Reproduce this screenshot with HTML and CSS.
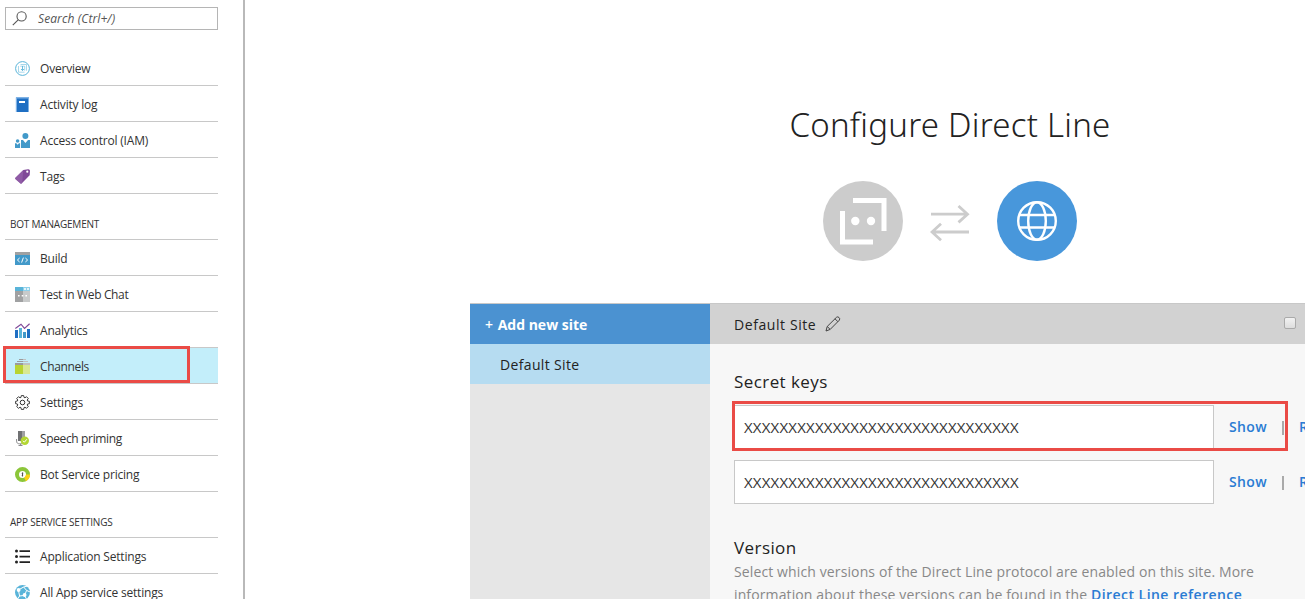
FILE: index.html
```
<!DOCTYPE html>
<html lang="en">
<head>
<meta charset="utf-8">
<title>Configure Direct Line</title>
<link rel="stylesheet" href="styles.css">
</head>
<body>
<div class="app">
  <aside class="sidebar">
    <div class="search">
      <svg class="search-icon" width="16" height="16" viewBox="0 0 16 16" fill="none" stroke="#555" stroke-width="1.1"><circle cx="9.6" cy="5.4" r="4.6"/><path d="M6.4 8.700 .8 14.200"/></svg>
      <span class="search-text">Search (Ctrl+/)</span>
    </div>
    <ul class="menu">
      <li class="item"><svg class="icon" viewBox="0 0 15 15" fill="none" stroke="#59b4d9"><circle cx="7.5" cy="7.5" r="6.9" stroke-width="1"/><path d="M5.5 3.5h6v6.2M3.5 5v6.2h6M5.2 5.2h4.5v4.5" stroke-width=".7" opacity=".75"/><path d="M7.5 5v4.5M6 8l1.5 1.6L9 8" stroke-width=".9"/></svg><span class="label">Overview</span></li>
      <li class="item"><svg class="icon" viewBox="0 0 15 15"><path fill="#1f6fc3" d="M1 1h12v14H1z"/><path fill="#7fb2e5" d="M1 0h13v1.5H2V15H.8V1zM13 0h1v15h-1z"/><path fill="#fff" d="M4 4h6v2H4z"/></svg><span class="label">Activity log</span></li>
      <li class="item"><svg class="icon" viewBox="0 0 15 15" fill="#4299c9"><circle cx="10.4" cy="3" r="3"/><circle cx="2.6" cy="8" r="1.8"/><path d="M6 7h2l2.4 3L13 7h2v8H6zM0 10.3h1.3l1.3 1.5L4 10.3h1.1V15H0z"/></svg><span class="label">Access control (IAM)</span></li>
      <li class="item"><svg class="icon" viewBox="0 0 15 15"><path fill="#804998" d="M8.3.9 13 .2q2-.2 2 1.600L14.700 6.300 6.600 14.600Q6 15 5.400 14.600L.3 10Q-.2 9.400.4 8.800z"/><path fill="#9a68af" d="M8.3.9 7.200 14 6.600 14.600 6 14.800.3 10Q-.2 9.400.4 8.800z" opacity=".6"/><circle cx="12.300" cy="2.700" r="1.1" fill="#fff"/></svg><span class="label">Tags</span></li>
    </ul>
    <h2 class="group">BOT MANAGEMENT</h2>
    <ul class="menu ruled">
      <li class="item"><svg class="icon" viewBox="0 0 15 15"><path fill="#a0a1a2" d="M0 1h15v3H0z"/><path fill="#4299c9" d="M0 4h15v10H0z"/><path d="M4.6 7 2.4 9l2.2 2M10.4 7l2.2 2-2.2 2M8.4 6.6l-1.8 5" fill="none" stroke="#fff"/></svg><span class="label">Build</span></li>
      <li class="item"><svg class="icon" viewBox="0 0 15 15"><path fill="#a0a1a2" d="M0 4h8v11H0z"/><path fill="#c8caca" d="M8 4h7v11H8z"/><path fill="#59b4d9" d="M0 0h8v4H0z"/><path fill="#8fd0ea" d="M8 0h7v4H8z"/><path fill="#fff" d="M9 1.2h2v1.5H9zM12 1.2h2v1.5h-2zM3 8h1.6v1.6H3zM6.7 8h1.6v1.6H6.7zM10.4 8H12v1.6h-1.6z"/></svg><span class="label tight">Test in Web Chat</span></li>
      <li class="item"><svg class="icon" viewBox="0 0 15 15"><path fill="#1f6fc3" d="M0 7h3v8H0zM12 6h3v9h-3z"/><path fill="#59b4d9" d="M4 5h3v10H4z"/><path fill="#4299c9" d="M8 9h3v6H8z"/><path d="M.3 5.4 6 1.2l3.5 4.3L14.6.8" fill="none" stroke="#804998" stroke-width="1.2"/></svg><span class="label">Analytics</span></li>
      <li class="item selected"><svg class="icon" viewBox="0 0 15 15"><path fill="#9a9b9c" d="M4 0h4v1H4zM2 2h6v1H2zM0 4h8v2H0z"/><path fill="#bfc1c2" d="M8 0h3v1H8zM8 2h5v1H8zM8 4h7v2H8z"/><path fill="#b8d432" d="M0 6h8v9H0z"/><path fill="#d8e893" d="M8 6h7v9H8z"/></svg><span class="label tight">Channels</span></li>
      <li class="item"><svg class="icon" viewBox="0 0 15 15" fill="none" stroke="#333"><circle cx="7.5" cy="7.5" r="2.3" stroke-width="1"/><path d="M6.3.6h2.4l.3 1.8 1 .4 1.5-1.1 1.8 1.8-1.1 1.5.4 1 1.8.3v2.4l-1.8.3-.4 1 1.1 1.5-1.8 1.8L10 12.2l-1 .4-.3 1.8H6.3L6 12.6l-1-.4-1.5 1.1-1.8-1.8L2.8 10l-.4-1-1.8-.3V6.3L2.4 6l.4-1-1.1-1.5 1.8-1.8L5 2.8l1-.4z" stroke-width=".95" stroke-linejoin="round"/></svg><span class="label">Settings</span></li>
      <li class="item"><svg class="icon" viewBox="0 0 15 15"><path fill="#707173" d="M3 0h4v10H3z"/><path fill="#a0a1a2" d="M7 0h3v9H7z"/><path d="M1.6 8v2.2c0 1.7 1 2.6 3 2.6h3M5.6 13v1.5M3.5 14.5h4" fill="none" stroke="#8a8b8c"/><circle cx="9.8" cy="9.8" r="4.2" fill="#b3d632"/><path d="m8 9.8 1.4 1.4 2.5-3" fill="none" stroke="#fff"/></svg><span class="label tight">Speech priming</span></li>
      <li class="item"><svg class="icon" viewBox="0 0 15 15" fill="none"><circle cx="7.5" cy="7.5" r="5.5" stroke="#8cc63a" stroke-width="4"/><path d="M13 7.500A5.500 5.500 0 0 1 10 12.400" stroke="#fcd116" stroke-width="4"/><path d="M8.300 6.200c-1.300-.4-1.800.6-.8 1.200s.5 1.500-.8 1.200M7.500 5.500v4" stroke="#333" stroke-width=".7"/></svg><span class="label">Bot Service pricing</span></li>
    </ul>
    <h2 class="group">APP SERVICE SETTINGS</h2>
    <ul class="menu ruled">
      <li class="item"><svg class="icon" viewBox="0 0 15 15" fill="#222"><circle cx="1.5" cy="2" r="1.5"/><circle cx="1.5" cy="7.5" r="1.5"/><circle cx="1.5" cy="13" r="1.5"/><path d="M4.5 1.200H15v1.800H4.500zM4.500 6.700H15v1.800H4.500zM4.500 12.200H15v1.800H4.500z"/></svg><span class="label">Application Settings</span></li>
      <li class="item"><svg class="icon" viewBox="0 0 15 15"><circle cx="7.5" cy="7.5" r="7.5" fill="#59b4d9"/><path d="m3.4 5 5.2-3 3 3.4-2 5-5 .6zM8.6 2l4-1M11.6 5.4 15 7M9.6 10.4l2 4M4.6 11l-2 3" fill="none" stroke="#fff" stroke-width="1"/><circle cx="3.6" cy="5" r="1.9" fill="#fff"/><circle cx="9.6" cy="10" r="1.9" fill="#fff"/></svg><span class="label">All App service settings</span></li>
    </ul>
    <div class="mark mark-channels"></div>
  </aside>
  <main class="main">
    <div class="content">
      <h1 class="title">Configure Direct Line</h1>
      <div class="hero">
        <svg width="80" height="80" viewBox="0 0 80 80"><circle cx="40" cy="40" r="40" fill="#ccc"/><path d="M30 19.5h31V50M19.500 30v31H50" fill="none" stroke="#fff" stroke-width="5"/><circle cx="32.300" cy="40" r="4.200" fill="#fff"/><circle cx="48" cy="40" r="4.200" fill="#fff"/></svg>
        <svg width="40" height="42" viewBox="0 0 40 42" fill="none" stroke="#ccc" stroke-width="2.800"><path d="M1 14.200h36M28.500 6l9 8.200-9 8.200M39 32H3M11 23.800l-9 8.200 9 8.200"/></svg>
        <svg width="80" height="80" viewBox="0 0 80 80"><circle cx="40" cy="40" r="40" fill="#4897db"/><g fill="none" stroke="#fff" stroke-width="2.400"><circle cx="40" cy="40" r="18.800"/><ellipse cx="40" cy="40" rx="8.800" ry="18.800"/><path d="M22.500 34h35M22.500 46.500h35"/></g></svg>
      </div>
      <div class="panel">
        <div class="sites">
          <div class="add"><span class="plus">+</span> <b class="add-text">Add new site</b></div>
          <div class="site">Default Site</div>
        </div>
        <div class="detail">
          <div class="detail-head">
            <span class="site-name">Default Site</span>
            <svg class="pencil" width="16" height="16" viewBox="0 0 16 16" fill="none" stroke="#444"><path d="M1 15l1.200-4.500L11.500 1.300q1.200-1 2.500.2t.4 2.600L5.200 13.400zM2.200 10.500l3 2.900M10 2.800l3 3" stroke-width="1"/></svg>
            <span class="check"></span>
          </div>
          <div class="detail-body">
            <h3 class="heading">Secret keys</h3>
            <div class="key"><div class="field"><span class="secret">XXXXXXXXXXXXXXXXXXXXXXXXXXXXXXX</span></div><a class="link show">Show</a><span class="bar"></span><a class="link">R</a><div class="mark mark-key"></div></div>
            <div class="key"><div class="field"><span class="secret">XXXXXXXXXXXXXXXXXXXXXXXXXXXXXXX</span></div><a class="link show">Show</a><span class="bar"></span><a class="link">R</a></div>
            <h3 class="heading version">Version</h3>
            <p class="copy">Select which versions of the Direct Line protocol are enabled on this site. More<br>information about these versions can be found in the <a class="ref">Direct Line reference</a></p>
          </div>
        </div>
      </div>
    </div>
  </main>
</div>
</body>
</html>
```
FILE: styles.css
```
* { box-sizing: border-box; }
body { margin: 0; background: #fff; font-family: "Open Sans", "Noto Sans", sans-serif; color: #222; }
.app { display: flex; height: 599px; overflow: hidden; }
.sidebar { position: relative; flex: none; width: 245px; height: 599px; overflow: hidden; padding: 7px 25px 0 5px; border-right: 2px solid #b9b9b9; }
.search { display: flex; align-items: center; height: 23px; margin-bottom: 20px; padding-left: 6px; border: 1px solid #b5b5b5; }
.search-text { margin-left: 10px; font-size: 12px; font-style: italic; letter-spacing: 0.1px; color: #555; }
.menu { list-style: none; margin: 0; padding: 0; }
.ruled { border-top: 1px solid #c8c8c8; }
.item { display: flex; align-items: center; height: 36px; padding: 2px 0 0 10px; border-bottom: 1px solid #c8c8c8; font-size: 12px; color: #333; white-space: nowrap; }
.icon { flex: none; width: 15px; height: 15px; margin-right: 10px; }
.label { letter-spacing: -0.2px; }
.tight { letter-spacing: -0.36px; }
.selected { background: #c3eefa; }
.group { height: 45px; margin: 0; padding: 4px 0 0 5px; line-height: 52px; font-size: 10px; font-weight: 400; letter-spacing: -0.2px; color: #333; white-space: nowrap; }
.mark { position: absolute; border: 3px solid #ea4b46; }
.mark-channels { left: 3px; top: 346px; width: 187px; height: 37px; }
.main { flex: 1; min-width: 0; overflow: hidden; padding-left: 225px; }
.content { width: 960px; padding-top: 101px; }
.title { margin: 0; height: 50px; line-height: 48px; text-align: center; font-family: "Noto Sans", "Open Sans", sans-serif; font-size: 33px; font-weight: 300; letter-spacing: 0.25px; color: #222; }
.hero { display: flex; justify-content: center; align-items: center; gap: 27px; margin: 30px 0 42px; }
.panel { display: flex; height: 400px; border-top: 1px solid #c8c8c8; background: #f7f7f7; }
.sites { flex: none; width: 240px; background: #e6e6e6; font-size: 14px; line-height: 42px; }
.add { height: 40px; padding-left: 15px; color: #fff; background: #4b92d1; }
.plus { font-weight: 600; }
.add-text { margin-left: 1px; }
.site { height: 40px; padding-left: 30px; letter-spacing: 0.35px; background: #b6dcf1; }
.detail { flex: 1; }
.detail-head { display: flex; align-items: center; height: 40px; padding-left: 24px; background: #d2d2d2; font-size: 14px; }
.site-name { letter-spacing: 0.58px; }
.pencil { margin-left: 9px; }
.check { width: 12px; height: 12px; margin: 0 0 2px 443px; border: 1px solid #aaa; border-radius: 2px; background: linear-gradient(#f2f2f2, #ddd); }
.detail-body { padding: 24px 0 0 24px; }
.heading { margin: 0 0 9px; line-height: 28px; font-size: 17px; font-weight: 500; letter-spacing: 0.42px; color: #222; }
.key { position: relative; display: flex; align-items: center; height: 44px; margin-bottom: 11px; }
.field { display: flex; align-items: center; width: 480px; height: 44px; padding-left: 9px; border: 1px solid #c8c8c8; background: #fff; }
.secret { font-size: 15px; letter-spacing: 0.2px; color: #333; }
.link { padding-bottom: 2px; font-size: 14px; font-weight: 600; letter-spacing: 0.35px; color: #2a7bd3; }
.show { width: 53px; margin-left: 15px; }
.bar { width: 2px; height: 14px; margin: 2px 15px 0 0; background: #aaa; }
.mark-key { left: -2px; top: -4px; width: 556px; height: 50px; }
.version { margin: 30px 0 0; }
.copy { margin: -2px 0 0; line-height: 23px; font-size: 14px; letter-spacing: 0.12px; color: #888; white-space: nowrap; }
.ref { font-weight: 600; letter-spacing: 0.45px; color: #2a7bd3; }
```
